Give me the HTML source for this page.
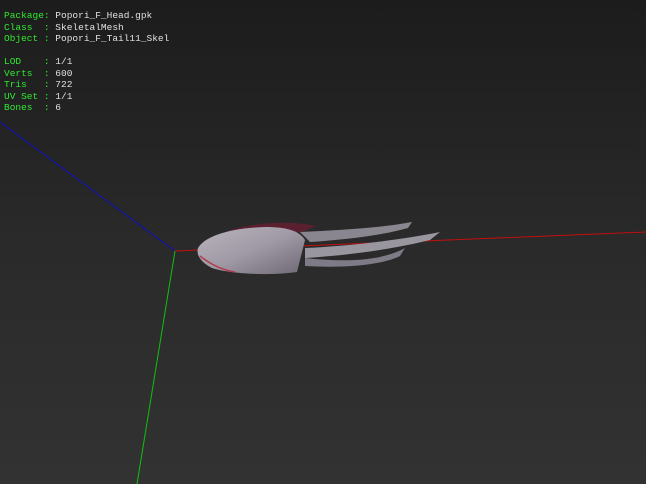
<!DOCTYPE html>
<html><head><style>
html,body{margin:0;padding:0}
body{width:646px;height:484px;overflow:hidden;background:linear-gradient(#1c1c1c,#2a2a2a 50%,#323232);position:relative;font-family:"Liberation Mono",monospace;}
.t{position:absolute;left:4px;font-size:9.5px;line-height:11.5px;color:#e0e0e0;white-space:pre}
.g{color:#2ee82e}
</style></head><body>
<svg width="646" height="484" style="position:absolute;left:0;top:0">
<line x1="0" y1="122" x2="175" y2="251" stroke="#1010c0" stroke-width="1"/>
<line x1="175" y1="251" x2="646" y2="232" stroke="#c01010" stroke-width="1"/>
<line x1="175" y1="251" x2="137" y2="484" stroke="#10c010" stroke-width="1"/>
<defs><linearGradient id="m" x1="0" y1="0" x2="1" y2="1"><stop offset="0" stop-color="#b8b4bc"/><stop offset="0.5" stop-color="#a09aa6"/><stop offset="1" stop-color="#6e6874"/></linearGradient></defs>
<path d="M218,236 C240,222 290,220 316,226 L302,232 Z" fill="#5a2030"/>
<path d="M300,232 C340,230 380,228 412,222 L408,228 C380,236 340,240 310,242 Z" fill="#8a8690"/>
<path d="M305,248 C350,246 400,240 440,232 L430,240 C390,250 340,256 305,258 Z" fill="#9a96a0"/>
<path d="M305,258 C340,262 380,262 405,248 L400,256 C380,266 340,268 305,266 Z" fill="#7e7a86"/>
<path d="M198,248 C205,236 230,228 265,227 C290,227 300,232 305,240 L297,272 C270,276 230,274 212,268 C200,262 196,254 198,248 Z" fill="url(#m)"/>
<path d="M200,256 C210,264 222,270 235,272" stroke="#b04050" stroke-width="1.5" fill="none"/>
</svg>
<div class="t" style="top:10px"><span class="g">Package:</span> Popori_F_Head.gpk
<span class="g">Class  :</span> SkeletalMesh
<span class="g">Object :</span> Popori_F_Tail11_Skel

<span class="g">LOD    :</span> 1/1
<span class="g">Verts  :</span> 600
<span class="g">Tris   :</span> 722
<span class="g">UV Set :</span> 1/1
<span class="g">Bones  :</span> 6</div>
</body></html>
